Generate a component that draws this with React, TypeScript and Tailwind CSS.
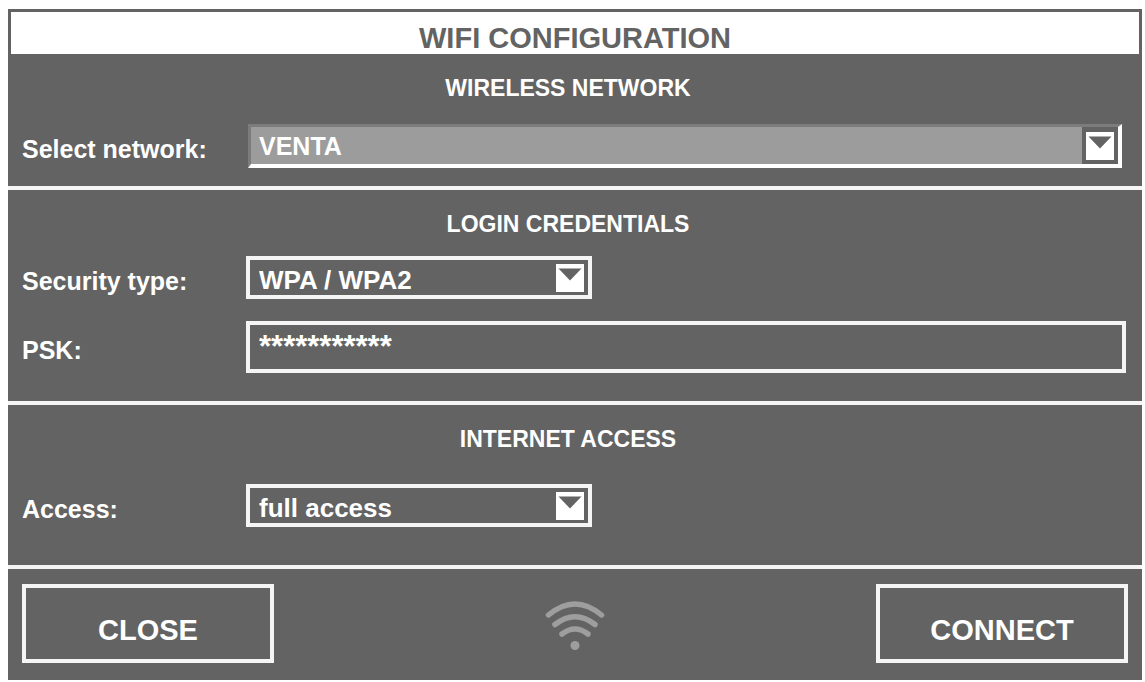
import { useState } from "react";
import type { ReactNode } from "react";
import clsx from "clsx";

const networks = ["VENTA"];
const securityTypes = ["WPA / WPA2", "WPA3", "WEP", "none"];
const accessLevels = ["full access", "local only"];

function Section({
  title,
  className,
  children,
}: {
  title: string;
  className?: string;
  children: ReactNode;
}) {
  return (
    <section className={clsx("pr-4 pl-[14px] pt-5", className)}>
      <h2 className="pr-3 text-center text-[23px] leading-7 font-bold">
        {title}
      </h2>
      {children}
    </section>
  );
}

function Row({
  id,
  label,
  className,
  children,
}: {
  id: string;
  label: string;
  className?: string;
  children: ReactNode;
}) {
  return (
    <div className={clsx("flex items-center", className)}>
      <label
        htmlFor={id}
        className="w-56 shrink-0 pt-[6px] text-[25px] leading-7 font-bold"
      >
        {label}
      </label>
      {children}
    </div>
  );
}

function Arrow({ className }: { className?: string }) {
  return (
    <svg
      viewBox="0 0 28 28"
      className={clsx("pointer-events-none absolute size-7", className)}
      aria-hidden="true"
    >
      <rect width="28" height="28" fill="#fff" />
      <path d="M2.5 4.5h23L14 16.5z" fill="#636363" />
    </svg>
  );
}

function Select({ id, options }: { id: string; options: string[] }) {
  return (
    <div className="relative w-[346px]">
      <select
        id={id}
        className="block h-[43px] w-full appearance-none border-4 border-neutral-100 bg-transparent pt-1 pl-[9px] text-[26px] leading-7 font-bold outline-none"
      >
        {options.map((option) => (
          <option key={option}>{option}</option>
        ))}
      </select>
      <Arrow className="top-2 right-2" />
    </div>
  );
}

function WifiIcon() {
  return (
    <svg
      viewBox="0 0 60 52"
      className="h-[52px] w-[60px]"
      fill="none"
      stroke="#9e9e9e"
      strokeWidth="5.5"
      strokeLinecap="round"
      aria-hidden="true"
    >
      <path d="M3.5 17Q30-5 56.5 17" />
      <path d="M10 26.5Q30 11 50 26.5" />
      <path d="M17 36Q30 26 43 36" />
      <circle cx="30" cy="47.5" r="4.5" fill="#9e9e9e" stroke="none" />
    </svg>
  );
}

function Button({ children }: { children: ReactNode }) {
  return (
    <button
      type="button"
      className="h-[79px] w-[252px] border-4 border-neutral-100 pt-3 text-[29px] leading-8 font-bold"
    >
      {children}
    </button>
  );
}

export default function App() {
  const [psk, setPsk] = useState("***********");

  return (
    <main className="bg-white pt-[9px] pr-[3px] pb-[2px] pl-2 font-['Liberation_Sans',Arial,sans-serif] text-white">
      <form className="bg-[#636363] pt-[3px]">
        <h1 className="mx-[3px] h-[42px] bg-white pt-[10px] text-center text-[29px] leading-8 font-bold text-[#636363]">
          WIFI CONFIGURATION
        </h1>

        <Section title="WIRELESS NETWORK" className="pb-[18px]">
          <Row id="network" label="Select network:" className="mt-[22px]">
            <div className="relative mr-1 ml-[2px] flex-1">
              <select
                id="network"
                className="block h-11 w-full appearance-none border-t-[3px] border-r-4 border-b-4 border-l-[3px] border-t-[#7c7c7c] border-r-white border-b-white border-l-[#7c7c7c] bg-[#9c9c9c] pl-2 text-[25px] leading-7 font-bold outline-none"
              >
                {networks.map((network) => (
                  <option key={network}>{network}</option>
                ))}
              </select>
              <div className="pointer-events-none absolute top-[3px] right-1 h-[37px] w-9 bg-[#636363]">
                <Arrow className="top-[5px] left-1" />
              </div>
            </div>
          </Row>
        </Section>

        <Section
          title="LOGIN CREDENTIALS"
          className="border-t-4 border-neutral-100 pb-7"
        >
          <Row id="security" label="Security type:" className="mt-[18px]">
            <Select id="security" options={securityTypes} />
          </Row>
          <Row id="psk" label="PSK:" className="mt-[22px]">
            <input
              id="psk"
              type="text"
              value={psk}
              onChange={(e) => setPsk(e.target.value)}
              autoComplete="off"
              className="h-[52px] min-w-0 flex-1 border-4 border-neutral-100 bg-transparent pl-[9px] text-[31px] leading-8 font-bold outline-none"
            />
          </Row>
        </Section>

        <Section
          title="INTERNET ACCESS"
          className="border-t-4 border-neutral-100 pb-[38px]"
        >
          <Row id="access" label="Access:" className="mt-[31px]">
            <Select id="access" options={accessLevels} />
          </Row>
        </Section>

        <footer className="flex items-center justify-between border-t-4 border-neutral-100 pt-[15px] pr-[14px] pb-[17px] pl-[14px]">
          <Button>CLOSE</Button>
          <WifiIcon />
          <Button>CONNECT</Button>
        </footer>
      </form>
    </main>
  );
}
